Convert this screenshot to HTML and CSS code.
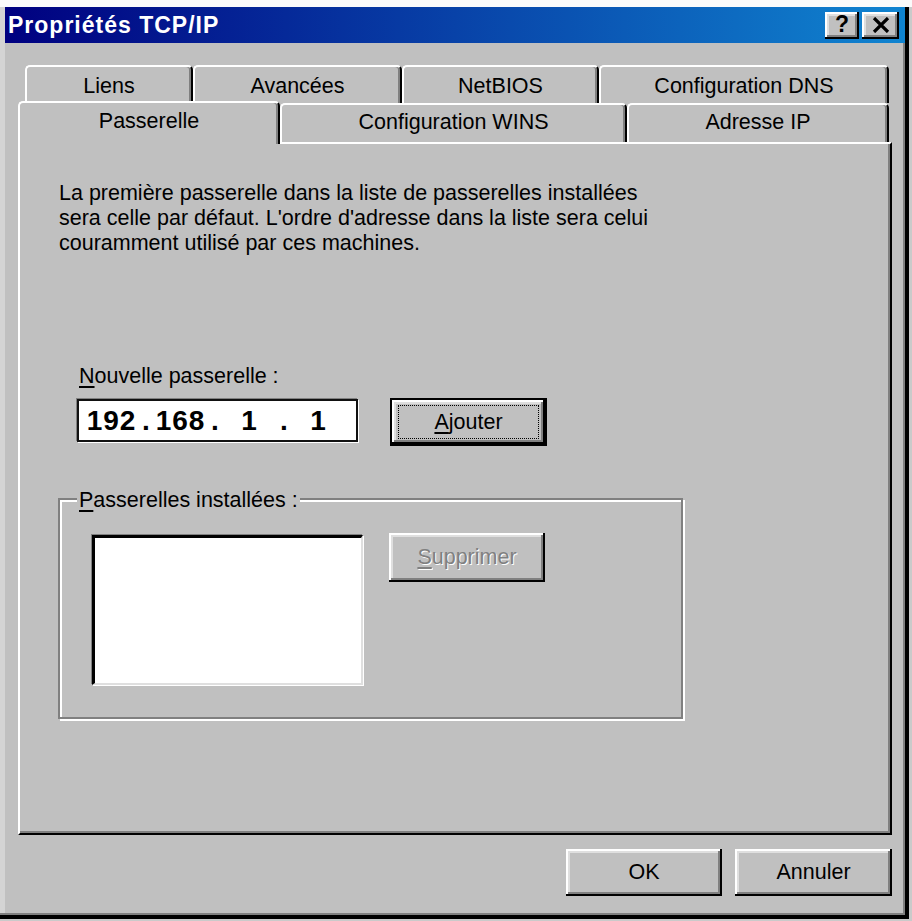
FILE: index.html
```html
<!DOCTYPE html>
<html lang="fr">
<head>
<meta charset="utf-8">
<title>Propriétés TCP/IP</title>
<link rel="stylesheet" href="styles.css">
</head>
<body>
<div class="window">
  <div class="titlebar">
    <span class="title">Propriétés TCP/IP</span>
    <div class="caption-btns">
      <span class="cbtn help">?</span>
      <span class="cbtn close"><svg width="18" height="16" viewBox="0 0 18 16"><path d="M2 1 L16 15 M16 1 L2 15" stroke="#000" stroke-width="3.2" fill="none"/></svg></span>
    </div>
  </div>
  <div class="client">
    <div class="tabs">
      <div class="tabrow back">
        <div class="tab w-liens">Liens</div>
        <div class="tab w-avancees">Avancées</div>
        <div class="tab w-netbios">NetBIOS</div>
        <div class="tab w-dns">Configuration DNS</div>
      </div>
      <div class="tabrow front">
        <div class="tab active w-pass">Passerelle</div>
        <div class="tab w-wins">Configuration WINS</div>
        <div class="tab w-ip">Adresse IP</div>
      </div>
    </div>
    <div class="panel">
      <p class="intro">La première passerelle dans la liste de passerelles installées sera celle par défaut. L'ordre d'adresse dans la liste sera celui couramment utilisé par ces machines.</p>
      <div class="newgw">
        <div class="lbl"><u>N</u>ouvelle passerelle :</div>
        <div class="row">
          <div class="ipbox">
            <span class="oct">192</span><span class="dot">.</span><span class="oct">168</span><span class="dot">.</span><span class="oct">1</span><span class="dot">.</span><span class="oct">1</span>
          </div>
          <div class="btn default add"><span class="focus"><u>A</u>jouter</span></div>
        </div>
      </div>
      <div class="group">
        <span class="legend"><u>P</u>asserelles installées :</span>
        <div class="listbox"></div>
        <div class="btn disabled remove"><u>S</u>upprimer</div>
      </div>
    </div>
    <div class="actions">
      <div class="btn ok">OK</div>
      <div class="btn cancel">Annuler</div>
    </div>
  </div>
</div>
</body>
</html>
```

FILE: styles.css
```css
* { box-sizing: border-box; }
html, body { margin: 0; padding: 0; background: #fff; }
body {
  font-family: "Liberation Sans", Arial, sans-serif;
  font-size: 21.5px;
  color: #000;
}
u { text-decoration-thickness: 2px; text-underline-offset: 3px; }

.window {
  width: 912px;
  height: 921px;
  background: #c0c0c0;
  padding: 7px 7px 0 5px;
  box-shadow:
    inset 0 7px 0 #fbfbfb,
    inset -3px 0 0 #cacaca,
    inset 0 -2px 0 #cacaca,
    inset -7px 0 0 #000,
    inset 0 -6px 0 #000,
    inset -9px 0 0 #808080,
    inset 0 -8px 0 #808080,
    inset 5px 0 0 #d4d4d4;
}

.titlebar {
  height: 36px;
  background: linear-gradient(to right, #000080 0%, #1084d0 100%);
  display: flex;
  align-items: center;
  padding: 0 6px 0 3px;
}
.title {
  color: #fff;
  font-weight: bold;
  font-size: 23px;
  letter-spacing: 1px;
}
.caption-btns { margin-left: auto; display: flex; gap: 3px; }
.cbtn {
  width: 34px;
  height: 27px;
  background: #c0c0c0;
  box-shadow: inset -2px -2px 0 #000, inset 2px 2px 0 #fff, inset -4px -4px 0 #808080, inset 4px 4px 0 #dfdfdf;
  display: flex;
  align-items: center;
  justify-content: center;
}
.cbtn.help { font-weight: bold; font-size: 23px; line-height: 1; padding-bottom: 2px; }
.cbtn.close { width: 37px; padding-bottom: 1px; }

.client { padding-left: 13px; }

.tabs { margin-top: 22px; }
.tabrow { display: flex; align-items: flex-start; }
.tabrow.back { margin-left: 7px; height: 38px; }
.tabrow.front { height: 39px; }
.tab {
  background: #c0c0c0;
  border-top: 2px solid #fff;
  border-left: 2px solid #fff;
  border-right: 2px solid #000;
  border-radius: 5px 5px 0 0;
  box-shadow: inset -2px 0 0 #808080;
  display: flex;
  justify-content: center;
  align-items: center;
  line-height: 25px;
}
.tabrow.back .tab { height: 38px; padding-top: 2px; }
.tabrow.front .tab { height: 39px; padding-bottom: 2px; }
.tabrow.front .tab.active {
  height: 43px;
  margin-top: -2px;
  position: relative;
  z-index: 1;
  padding-bottom: 4px;
}
.w-liens { width: 168px; }
.w-avancees { width: 209px; }
.w-netbios { width: 197px; }
.w-dns { width: 290px; }
.w-pass { width: 262px; }
.w-wins { width: 347px; }
.w-ip { width: 262px; }

.panel {
  width: 874px;
  height: 693px;
  border-top: 2px solid #fff;
  border-left: 2px solid #fff;
  border-right: 2px solid #000;
  border-bottom: 2px solid #000;
  box-shadow: inset -2px -2px 0 #808080;
  padding: 37px 0 0 39px;
}
.intro {
  margin: 0;
  width: 600px;
  line-height: 25px;
}

.newgw { margin: 108px 0 0 18px; }
.lbl { line-height: 25px; padding-left: 2px; }
.row { display: flex; align-items: flex-start; margin-top: 9px; }
.ipbox {
  width: 281px;
  height: 43px;
  margin-top: 1px;
  background: #fff;
  border: 2px solid #111;
  box-shadow: -1px -1px 0 #808080, 1px 1px 0 #fff;
  display: flex;
  align-items: center;
  padding-left: 3px;
  font-weight: bold;
  font-size: 28px;
}
.oct { width: 59px; text-align: center; letter-spacing: 1px; }
.dot { width: 10px; text-align: center; }

.btn {
  background: #c0c0c0;
  box-shadow: inset -2px -2px 0 #000, inset 2px 2px 0 #fff, inset -4px -4px 0 #808080, inset 4px 4px 0 #dfdfdf;
  display: flex;
  align-items: center;
  justify-content: center;
  line-height: 25px;
}
.btn.default {
  border: 2px solid #000;
  padding: 5px 6px;
}
.add { width: 157px; height: 48px; margin-left: 32px; }
.focus {
  flex: 1;
  align-self: stretch;
  border: 1px dotted #000;
  display: flex;
  align-items: center;
  justify-content: center;
}
.btn.disabled { color: #808080; text-shadow: 1px 1px 0 #fff; }

.group {
  position: relative;
  margin: 52px 0 0 -1px;
  width: 625px;
  height: 221px;
  border: 2px solid #808080;
  box-shadow: inset 2px 2px 0 #fff, 2px 2px 0 #fff;
  padding: 35px 0 0 32px;
  display: flex;
  align-items: flex-start;
}
.legend {
  position: absolute;
  top: -12px;
  left: 17px;
  padding: 0 2px;
  background: #c0c0c0;
  line-height: 25px;
}
.listbox {
  width: 271px;
  height: 150px;
  background: #fff;
  border-top: 3px solid #000;
  border-left: 3px solid #000;
  border-right: 2px solid #dfdfdf;
  border-bottom: 2px solid #dfdfdf;
  box-shadow: -1px -1px 0 #808080, 1px 1px 0 #fff;
}
.remove { width: 156px; height: 49px; margin: -2px 0 0 26px; }

.actions {
  width: 874px;
  display: flex;
  justify-content: flex-end;
  gap: 13px;
  margin-top: 14px;
}
.ok { width: 156px; height: 47px; }
.cancel { width: 157px; height: 47px; }
```
